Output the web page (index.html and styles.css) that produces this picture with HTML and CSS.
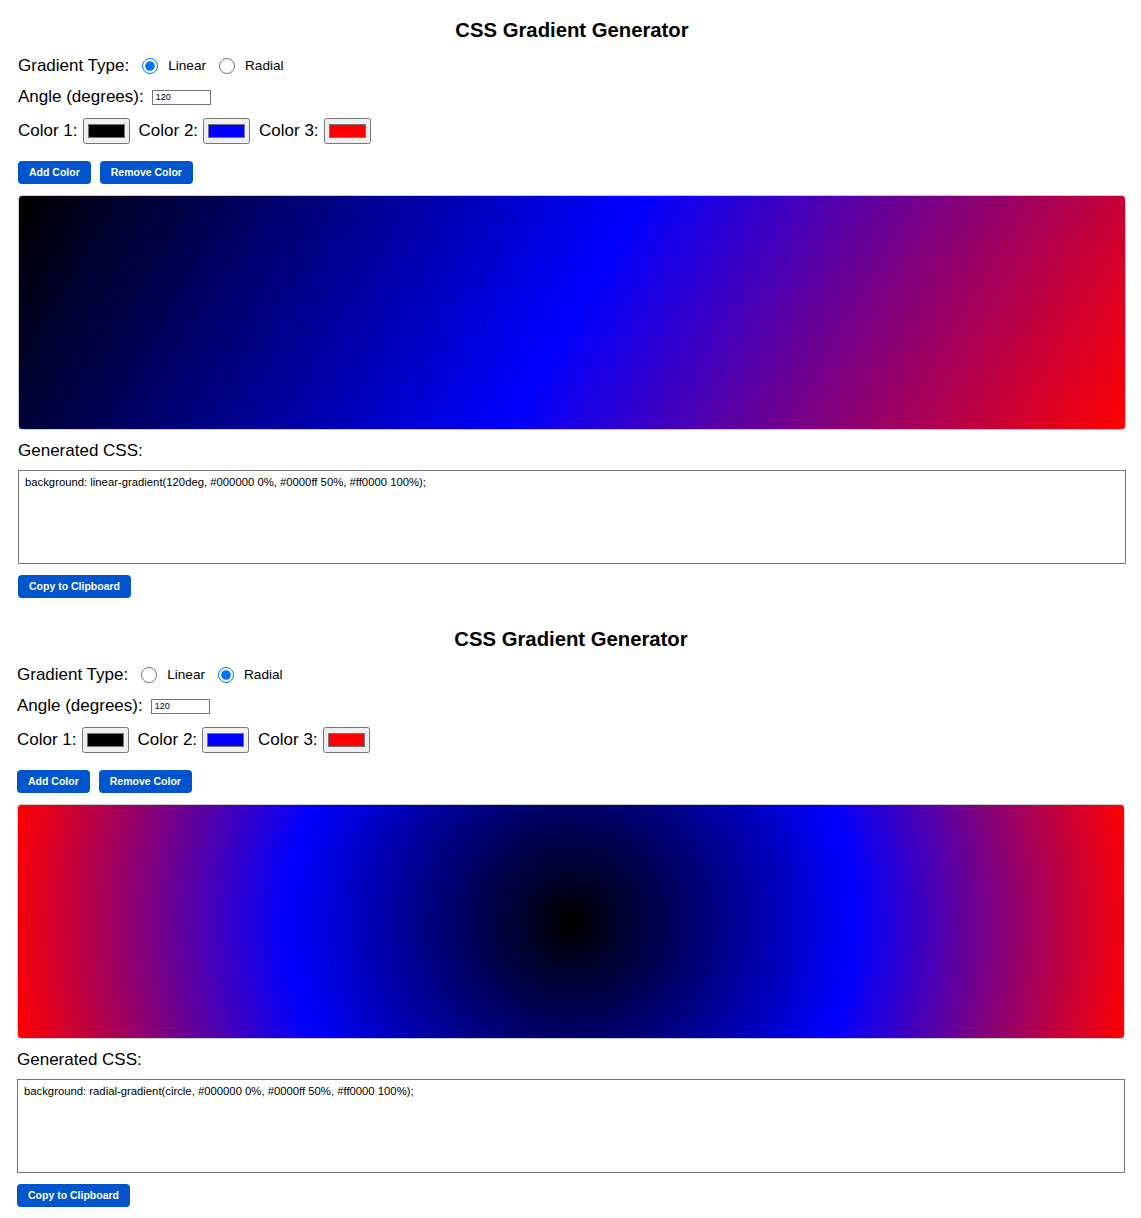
FILE: index.html
```html
<!DOCTYPE html>
<html lang="en">
<head>
<meta charset="utf-8">
<title>CSS Gradient Generator</title>
<link rel="stylesheet" href="styles.css">
</head>
<body>
<section class="gen">
  <h1 class="title">CSS Gradient Generator</h1>
  <div class="row row-type">
    <span class="label">Gradient Type:</span>
    <input class="radio" type="radio" name="type1" checked>
    <span class="radio-text">Linear</span>
    <input class="radio" type="radio" name="type1">
    <span class="radio-text">Radial</span>
  </div>
  <div class="row row-angle">
    <span class="label">Angle (degrees):</span>
    <input class="angle" type="text" value="120">
  </div>
  <div class="row row-colors">
    <span class="label color-label">Color 1:</span>
    <input class="color" type="color" value="#000000">
    <span class="label color-label">Color 2:</span>
    <input class="color" type="color" value="#0000ff">
    <span class="label color-label">Color 3:</span>
    <input class="color" type="color" value="#ff0000">
  </div>
  <div class="row row-buttons">
    <button class="btn">Add Color</button>
    <button class="btn">Remove Color</button>
  </div>
  <div class="preview preview-linear"></div>
  <div class="label css-label">Generated CSS:</div>
  <textarea class="css-output" readonly>background: linear-gradient(120deg, #000000 0%, #0000ff 50%, #ff0000 100%);</textarea>
  <div class="row row-copy">
    <button class="btn">Copy to Clipboard</button>
  </div>
</section>

<section class="gen gen-second">
  <h1 class="title">CSS Gradient Generator</h1>
  <div class="row row-type">
    <span class="label">Gradient Type:</span>
    <input class="radio" type="radio" name="type2">
    <span class="radio-text">Linear</span>
    <input class="radio" type="radio" name="type2" checked>
    <span class="radio-text">Radial</span>
  </div>
  <div class="row row-angle">
    <span class="label">Angle (degrees):</span>
    <input class="angle" type="text" value="120">
  </div>
  <div class="row row-colors">
    <span class="label color-label">Color 1:</span>
    <input class="color" type="color" value="#000000">
    <span class="label color-label">Color 2:</span>
    <input class="color" type="color" value="#0000ff">
    <span class="label color-label">Color 3:</span>
    <input class="color" type="color" value="#ff0000">
  </div>
  <div class="row row-buttons">
    <button class="btn">Add Color</button>
    <button class="btn">Remove Color</button>
  </div>
  <div class="preview preview-radial"></div>
  <div class="label css-label">Generated CSS:</div>
  <textarea class="css-output" readonly>background: radial-gradient(circle, #000000 0%, #0000ff 50%, #ff0000 100%);</textarea>
  <div class="row row-copy">
    <button class="btn">Copy to Clipboard</button>
  </div>
</section>
</body>
</html>
```

FILE: styles.css
```css
html, body {
  margin: 0;
  padding: 0;
  background: #ffffff;
}

body {
  font-family: "Liberation Sans", Arial, sans-serif;
  color: #000000;
}

.gen {
  width: 1108px;
  margin-left: 18px;
  padding: 18px 0 11px 0;
  display: flex;
  flex-direction: column;
}

.gen-second {
  margin-left: 17px;
}

.title {
  margin: 0;
  font-size: 20.3px;
  font-weight: bold;
  line-height: 24px;
  text-align: center;
}

.row {
  display: flex;
  align-items: center;
}

.label {
  font-size: 17px;
  line-height: 20px;
  white-space: nowrap;
}

.row-type {
  margin-top: 12px;
  height: 24px;
}

.radio {
  width: 16px;
  height: 16px;
  margin: 0 10px 0 13px;
}

.radio-text {
  font-size: 13.6px;
  line-height: 16px;
}

.row-angle {
  margin-top: 7px;
  height: 24px;
}

.angle {
  box-sizing: border-box;
  width: 59px;
  height: 15px;
  margin: 0 0 0 8px;
  padding: 0 3px;
  border: 1px solid #767676;
  border-radius: 0;
  font-family: "Liberation Sans", Arial, sans-serif;
  font-size: 9px;
  color: #000;
}

.row-colors {
  margin-top: 9px;
  height: 26px;
}

.color-label {
  margin-right: 5px;
}

.color {
  box-sizing: border-box;
  width: 47px;
  height: 26px;
  margin: 0 9px 0 0;
}

.row-buttons {
  margin-top: 17px;
  gap: 9px;
}

.btn {
  background: #0055cc;
  color: #ffffff;
  border: none;
  border-radius: 4px;
  padding: 5px 11px;
  font-family: "Liberation Sans", Arial, sans-serif;
  font-size: 10.5px;
  font-weight: bold;
  line-height: 13px;
  cursor: pointer;
}

.preview {
  margin-top: 11px;
  height: 235px;
  box-sizing: border-box;
  border: 1px solid #cccccc;
  border-radius: 4px;
}

.preview-linear {
  background: linear-gradient(120deg, #000000 0%, #0000ff 50%, #ff0000 100%);
}

.preview-radial {
  background: radial-gradient(circle, #000000 0%, #0000ff 50%, #ff0000 100%);
}

.css-label {
  margin-top: 11px;
}

.css-output {
  display: block;
  margin: 9px 0 0 0;
  box-sizing: border-box;
  width: 1108px;
  height: 94px;
  padding: 4px 6px;
  border: 1px solid #767676;
  border-radius: 0;
  resize: none;
  font-family: "Liberation Sans", Arial, sans-serif;
  font-size: 11.3px;
  line-height: 14px;
  color: #000;
  background: #fff;
}

.row-copy {
  margin-top: 11px;
}
```
